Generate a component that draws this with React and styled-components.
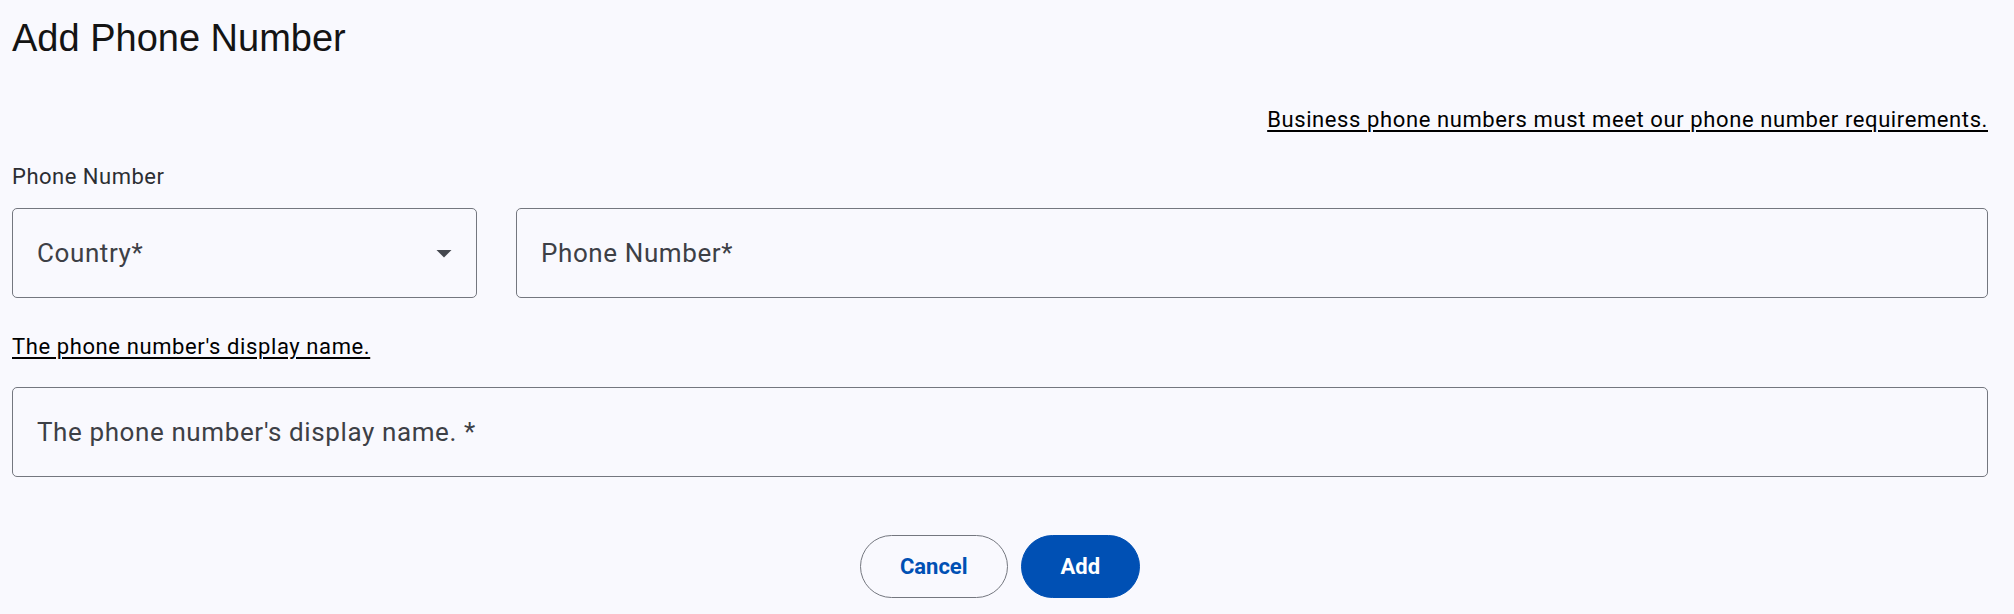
import React from "react";
import styled, { createGlobalStyle } from "styled-components";

const GlobalStyle = createGlobalStyle`
  html, body {
    margin: 0;
    padding: 0;
    background: #f9f9fe;
  }
  body {
    font-family: Roboto, "Liberation Sans", sans-serif;
  }
`;

const App = () => {
  return (
    <Page>
      <GlobalStyle />
      <Title>Add Phone Number</Title>
      <LinkRow>
        <HelpLink href="#">Business phone numbers must meet our phone number requirements.</HelpLink>
      </LinkRow>
      <FieldLabel>Phone Number</FieldLabel>
      <FieldRow>
        <SelectBox>
          <FieldText>Country*</FieldText>
          <Caret viewBox="0 0 24 24">
            <path d="M7 10l5 5 5-5z" />
          </Caret>
        </SelectBox>
        <TextInput placeholder="Phone Number*" $grow />
      </FieldRow>
      <HelpLink href="#" $block>The phone number's display name.</HelpLink>
      <TextInput placeholder="The phone number's display name. *" $spaced />
      <Actions>
        <Button>Cancel</Button>
        <Button $primary>Add</Button>
      </Actions>
    </Page>
  );
};

const Page = styled.div`
  width: 1976px;
  margin-left: 12px;
  padding-top: 15px;
  padding-bottom: 16px;
  display: flex;
  flex-direction: column;
`;

const Title = styled.h1`
  margin: 0;
  font-family: "Liberation Sans", Arial, sans-serif;
  font-size: 38px;
  font-weight: 400;
  line-height: 46px;
  color: #141414;
`;

const LinkRow = styled.div`
  display: flex;
  justify-content: flex-end;
  margin-top: 46px;
`;

const HelpLink = styled.a`
  display: block;
  align-self: flex-start;
  font-family: Roboto, sans-serif;
  font-size: 22px;
  line-height: 26px;
  letter-spacing: 0.6px;
  color: #000;
  text-decoration: underline;
  text-decoration-thickness: 2px;
  text-underline-offset: 3px;
  margin-top: ${(props) => (props.$block ? "36px" : "0")};
`;

const FieldLabel = styled.div`
  margin-top: 31px;
  font-size: 22px;
  line-height: 26px;
  letter-spacing: 0.5px;
  color: #2c2e33;
`;

const FieldRow = styled.div`
  display: flex;
  gap: 39px;
  margin-top: 18px;
`;

const SelectBox = styled.div`
  width: 465px;
  height: 90px;
  box-sizing: border-box;
  border: 1px solid #74777f;
  border-radius: 5px;
  padding: 0 14px 0 24px;
  display: flex;
  align-items: center;
  justify-content: space-between;
`;

const FieldText = styled.span`
  font-size: 26px;
  letter-spacing: 0.6px;
  color: #3d4046;
`;

const Caret = styled.svg`
  width: 36px;
  height: 36px;
  fill: #44474e;
`;

const TextInput = styled.input`
  flex: ${(props) => (props.$grow ? "1 1 0" : "0 0 auto")};
  min-width: 0;
  height: 90px;
  box-sizing: border-box;
  border: 1px solid #74777f;
  border-radius: 5px;
  background: transparent;
  padding: 0 24px;
  margin: ${(props) => (props.$spaced ? "27px 0 0" : "0")};
  font-family: Roboto, sans-serif;
  font-size: 26px;
  letter-spacing: 0.6px;
  color: #1b1c20;
  outline: none;

  &::placeholder {
    color: #3d4046;
    opacity: 1;
  }
`;

const Actions = styled.div`
  display: flex;
  justify-content: center;
  gap: 13px;
  margin-top: 58px;
`;

const Button = styled.button`
  height: 63px;
  padding: 0 39px;
  border-radius: 32px;
  font-family: Roboto, sans-serif;
  font-size: 22px;
  font-weight: 700;
  cursor: pointer;
  border: 1px solid ${(props) => (props.$primary ? "#0050b4" : "#74777f")};
  background: ${(props) => (props.$primary ? "#0050b4" : "transparent")};
  color: ${(props) => (props.$primary ? "#ffffff" : "#0050b4")};
`;

export default App;
